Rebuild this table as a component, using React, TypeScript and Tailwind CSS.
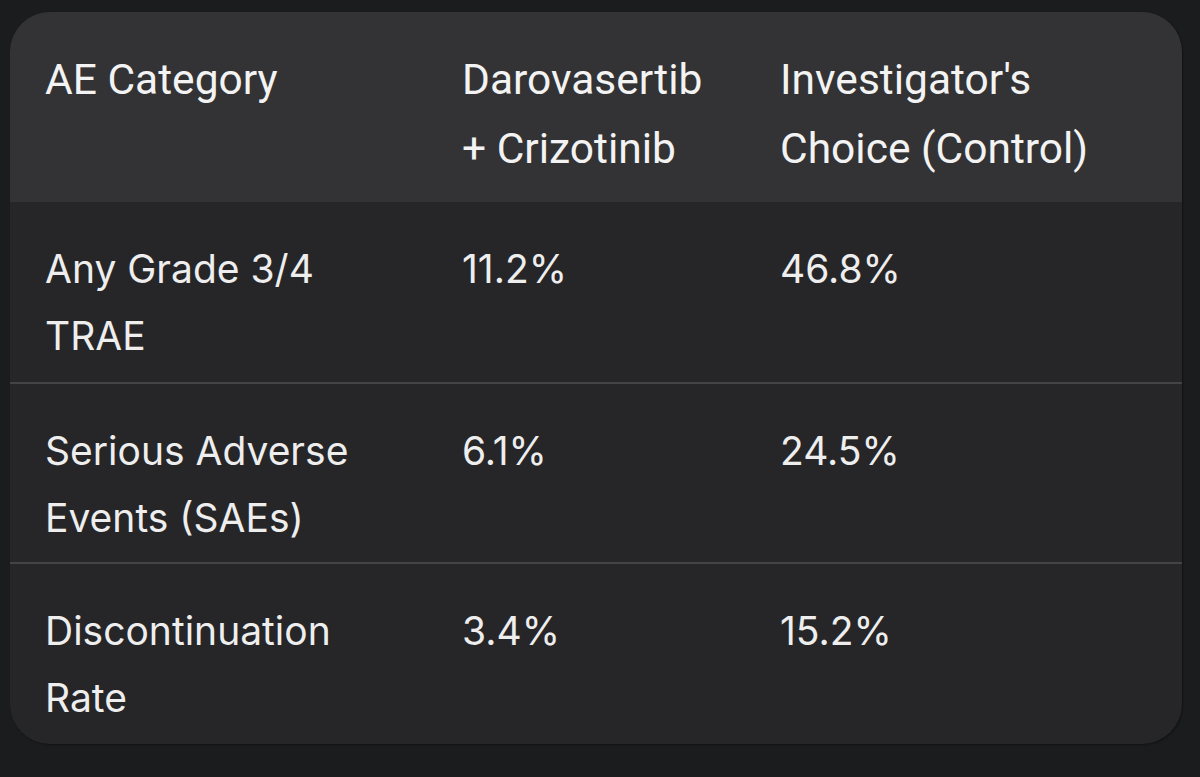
import React from "react";

const rows: [string, string, string][] = [
  ["Any Grade 3/4 TRAE", "11.2%", "46.8%"],
  ["Serious Adverse Events (SAEs)", "6.1%", "24.5%"],
  ["Discontinuation Rate", "3.4%", "15.2%"],
];

export default function App() {
  return (
    <div className="w-[1200px] h-[777px] bg-[#1b1c1e] pt-[12px] pl-[10px]">
      <div className="w-[1172px] h-[732px] rounded-[40px] overflow-hidden bg-[#262628] shadow-[1px_1px_2px_rgba(0,0,0,0.35)]">
        <div
          className="grid grid-cols-[417px_318px_1fr] h-[190px] bg-[#333335] text-[#f3f3f3] text-[42.5px] leading-[69px]"
          style={{ fontFamily: "Roboto, 'Noto Sans', sans-serif" }}
        >
          <div className="pl-[35px] pt-[33px]">AE Category</div>
          <div className="pl-[35px] pt-[33px]">
            Darovasertib
            <br />+ Crizotinib
          </div>
          <div className="pl-[35px] pt-[33px]">
            Investigator's
            <br />
            Choice (Control)
          </div>
        </div>
        {rows.map((r, i) => (
          <div
            key={i}
            className={
              "grid grid-cols-[417px_318px_1fr] h-[180px] text-[#eeeeee] text-[39px] leading-[67px] " +
              (i > 0 ? "border-t-2 border-[#444447]" : "")
            }
            style={{ fontFamily: "Inter, 'Liberation Sans', sans-serif" }}
          >
            <div className="pl-[35px] pr-[40px] pt-[33px]">{r[0]}</div>
            <div className="pl-[35px] pt-[33px]">{r[1]}</div>
            <div className="pl-[35px] pt-[33px]">{r[2]}</div>
          </div>
        ))}
      </div>
    </div>
  );
}
